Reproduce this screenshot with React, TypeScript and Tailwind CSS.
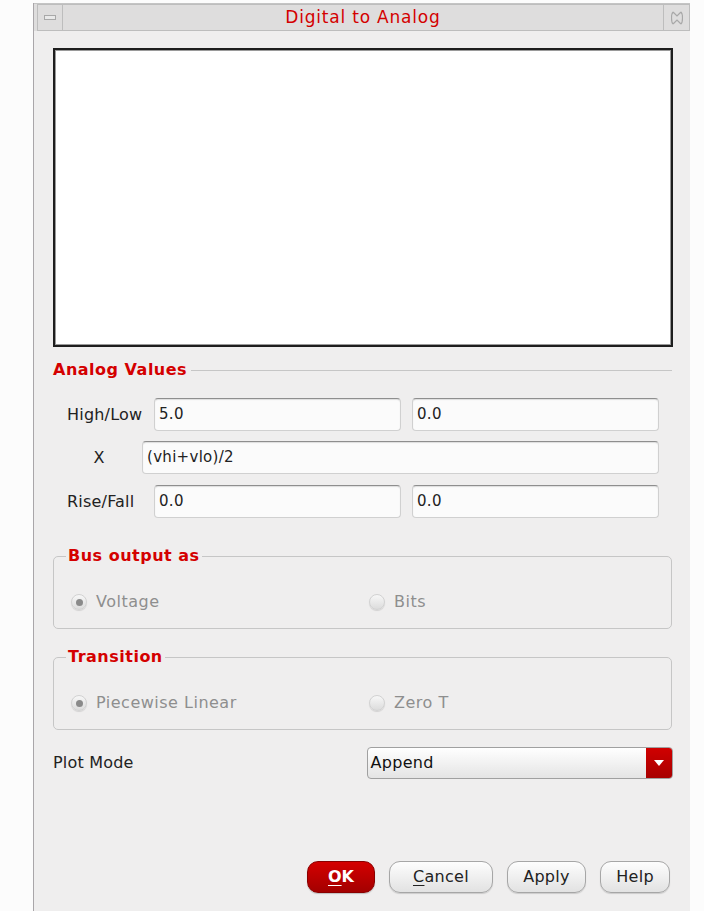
import React from 'react';

const Field = ({ value, className }: { value: string; className: string }) => (
  <div
    className={`h-[33px] rounded-[4px] bg-[#fbfbfb] border border-[#d0d0d0] border-t-[#8e8e8e] shadow-[inset_0_1px_1px_rgba(0,0,0,0.12)] px-[4px] flex items-center text-[15px] text-[#222] tracking-[0.3px] ${className}`}
  >
    {value}
  </div>
);

const Radio = ({ checked, label }: { checked?: boolean; label: string }) => (
  <div className="flex items-center">
    <span className="w-[16px] h-[16px] rounded-full bg-[linear-gradient(#f7f7f7,#dcdcdc)] border border-[#d2d2d2] shadow-[0_1px_1px_rgba(0,0,0,0.12)] flex items-center justify-center">
      {checked && <span className="w-[7px] h-[7px] rounded-full bg-[#8a8a8a]" />}
    </span>
    <span className="ml-[9px] text-[16px] text-[#8e8e8e] tracking-[0.5px]">{label}</span>
  </div>
);

const Group = ({ title, left, right }: { title: string; left: string; right: string }) => (
  <fieldset className="border border-[#c6c6c6] rounded-[5px] pl-[12px] pb-[16px]">
    <legend className="px-[2px] h-[20px] leading-[20px] text-[16px] font-bold text-[#d40000] tracking-[0.5px]">{title}</legend>
    <div className="flex items-center mt-[26px] pl-[5px] h-[20px]">
      <div className="w-[298px]">
        <Radio checked label={left} />
      </div>
      <Radio label={right} />
    </div>
  </fieldset>
);

const Btn = ({ children, w }: { children: React.ReactNode; w: string }) => (
  <button
    className={`${w} h-[32px] rounded-[11px] border border-[#a6a6a6] bg-[linear-gradient(#fdfdfd,#e2e2e2)] shadow-[0_1px_1px_rgba(0,0,0,0.15)] text-[16px] text-[#222] tracking-[0.3px]`}
  >
    {children}
  </button>
);

export default function App() {
  return (
    <div className="w-[704px] h-[911px] bg-[#fcfcfc] pt-[3px] pl-[33px] overflow-hidden font-['DejaVu_Sans',sans-serif]">
      <div className="w-[657px] h-[908px] flex flex-col border-l border-[#a9a6a9] bg-[#efeeee]">
        {/* title bar */}
        <div className="h-[28px] flex border-t border-[#c4c4c4] bg-[#dedddd]">
          <div className="w-[3px]" />
          <div className="w-[26px] h-[27px] border border-[#bdbdbd] flex items-center justify-center">
            <span className="w-[12px] h-[5px] border border-[#a8a8a8] bg-[#e9e9e9]" />
          </div>
          <div className="flex-1 border-y border-[#bdbdbd] flex items-center justify-center text-[17px] text-[#d40000] tracking-[0.8px]">
            Digital to Analog
          </div>
          <div className="w-[27px] h-[27px] border border-[#bdbdbd] flex items-center justify-center">
            <svg width="12" height="14" viewBox="0 0 12 14" fill="none" stroke="#a8a8a8" strokeWidth="1.2">
              <path d="M2 1 L6 5 L10 1 M2 13 L6 9 L10 13 M2 1 C0 3 0 11 2 13 M10 1 C12 3 12 11 10 13" />
            </svg>
          </div>
        </div>

        {/* body */}
        <div className="flex-1 flex flex-col pl-[19px] pr-[17px]">
          <div className="mt-[17px] h-[299px] border-2 border-[#1e1e1e] bg-white shadow-[inset_0_0_0_1px_#9a9a9a]" />

          <div className="mt-[13px] flex items-center h-[20px] pr-[1px]">
            <span className="text-[16px] font-bold text-[#d40000] tracking-[0.5px]">Analog Values</span>
            <span className="flex-1 ml-[4px] border-t border-[#c6c6c6]" />
          </div>

          <div className="mt-[18px] flex items-center pl-[14px]">
            <span className="w-[87px] text-[16px] text-[#222] tracking-[0.2px]">High/Low</span>
            <Field value="5.0" className="w-[247px]" />
            <Field value="0.0" className="w-[247px] ml-[11px]" />
          </div>
          <div className="mt-[10px] flex items-center pl-[14px]">
            <span className="w-[64px] text-center text-[16px] text-[#222]">X</span>
            <Field value="(vhi+vlo)/2" className="w-[517px] ml-[11px]" />
          </div>
          <div className="mt-[11px] flex items-center pl-[14px]">
            <span className="w-[87px] text-[16px] text-[#222] tracking-[0.2px]">Rise/Fall</span>
            <Field value="0.0" className="w-[247px]" />
            <Field value="0.0" className="w-[247px] ml-[11px]" />
          </div>

          <div className="mt-[28px] pr-[1px]">
            <Group title="Bus output as" left="Voltage" right="Bits" />
          </div>
          <div className="mt-[18px] pr-[1px]">
            <Group title="Transition" left="Piecewise Linear" right="Zero T" />
          </div>

          <div className="mt-[17px] flex items-center">
            <span className="w-[315px] text-[16px] text-[#222] tracking-[0.2px]">Plot Mode</span>
            <div className="w-[306px] h-[32px] flex rounded-[4px] border border-[#a0a0a0] bg-[linear-gradient(#ffffff,#e4e4e4)] overflow-hidden">
              <span className="flex-1 flex items-center pl-[2px] text-[16px] text-[#111] tracking-[0.3px]">Append</span>
              <span className="w-[26px] bg-[linear-gradient(#d00000,#a80000)] flex items-center justify-center">
                <svg width="10" height="6" viewBox="0 0 10 6">
                  <path d="M0 0 H10 L5 6 Z" fill="#ffffff" />
                </svg>
              </span>
            </div>
          </div>

          <div className="mt-[82px] flex justify-end gap-[14px] pr-[3px]">
            <button className="w-[68px] h-[32px] rounded-[11px] border border-[#8a0000] bg-[linear-gradient(#d40000,#a30000)] shadow-[0_1px_1px_rgba(0,0,0,0.2)] text-[16px] font-bold text-white">
              <span className="underline underline-offset-[3px]">O</span>K
            </button>
            <Btn w="w-[104px]">
              <span className="underline underline-offset-[3px]">C</span>ancel
            </Btn>
            <Btn w="w-[79px]">Apply</Btn>
            <Btn w="w-[70px]">Help</Btn>
          </div>
        </div>
      </div>
    </div>
  );
}
